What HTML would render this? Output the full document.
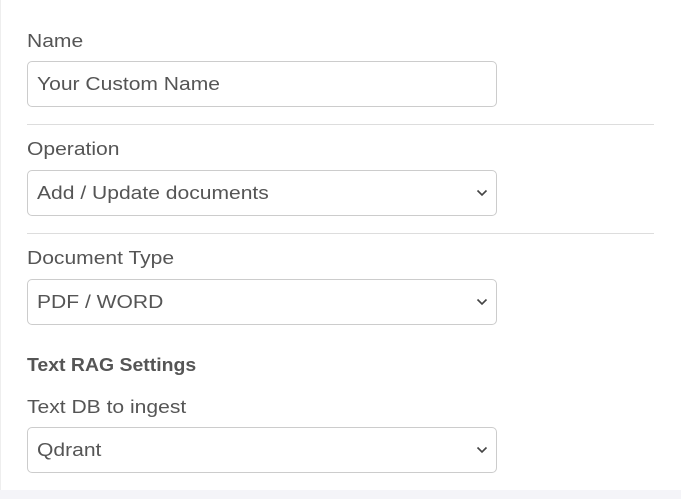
<!DOCTYPE html>
<html><head><style>
body{margin:0;width:681px;height:499px;background:#fff;font-family:"Liberation Sans",sans-serif;color:#555;position:relative;overflow:hidden}
.edge{position:absolute;left:0;top:0;width:1px;height:490px;background:#eee}
.band{position:absolute;left:0;top:490px;width:681px;height:9px;background:#f4f4f8}
.lbl{position:absolute;left:27px;font-size:18px;color:#555;line-height:20px;transform:scaleX(1.17);transform-origin:left}
.box{position:absolute;left:27px;width:468px;height:44px;border:1px solid #ccc;border-radius:5px;box-sizing:content-box}
.box span{position:absolute;left:9px;top:12px;font-size:18px;color:#555;line-height:20px;transform:scaleX(1.17);transform-origin:left;white-space:nowrap}
.box svg{position:absolute;right:8px;top:18px}
.hr{position:absolute;left:27px;width:627px;height:1px;background:#ddd}
</style></head><body>
<div class="edge"></div>
<div class="lbl" style="top:31px">Name</div>
<div class="box" style="top:61px"><span>Your Custom Name</span></div>
<div class="hr" style="top:124px"></div>
<div class="lbl" style="top:139px">Operation</div>
<div class="box" style="top:170px"><span>Add / Update documents</span><svg width="12" height="8" viewBox="0 0 12 8"><path d="M1.5 1.5l4.5 4.5 4.5-4.5" stroke="#444" stroke-width="1.6" fill="none"/></svg></div>
<div class="hr" style="top:233px"></div>
<div class="lbl" style="top:248px">Document Type</div>
<div class="box" style="top:279px"><span>PDF / WORD</span><svg width="12" height="8" viewBox="0 0 12 8"><path d="M1.5 1.5l4.5 4.5 4.5-4.5" stroke="#444" stroke-width="1.6" fill="none"/></svg></div>
<div class="lbl" style="top:355px;font-weight:bold;transform:scaleX(1.08)">Text RAG Settings</div>
<div class="lbl" style="top:397px">Text DB to ingest</div>
<div class="box" style="top:427px"><span>Qdrant</span><svg width="12" height="8" viewBox="0 0 12 8"><path d="M1.5 1.5l4.5 4.5 4.5-4.5" stroke="#444" stroke-width="1.6" fill="none"/></svg></div>
<div class="band"></div>
</body></html>
